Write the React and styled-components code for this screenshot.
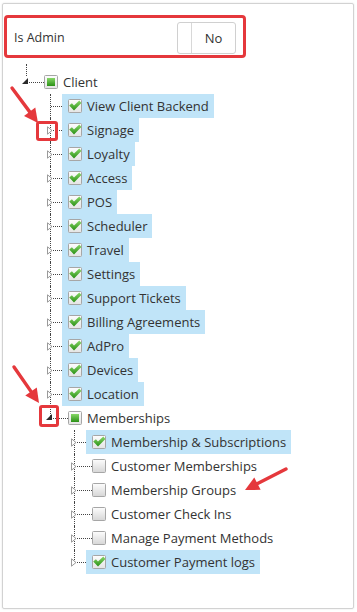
import React from "react";
import styled, { createGlobalStyle } from "styled-components";

const Global = createGlobalStyle`
  html, body { margin: 0; padding: 0; background: #fff; }
  body { font-family: "Open Sans", "Liberation Sans", sans-serif; color: #333; }
  * { box-sizing: border-box; }
`;

const Page = styled.div`
  position: relative;
  width: 357px;
  height: 612px;
  padding: 3px 3px 3px 2px;
`;

const Card = styled.div`
  width: 352px;
  height: 606px;
  border: 1px solid #d2d2d2;
  border-radius: 2px;
  box-shadow: 0 0 2px rgba(0, 0, 0, 0.12);
  padding: 11px 0 0 0;
  display: flex;
  flex-direction: column;
`;

const AdminRow = styled.div`
  margin-left: 1px;
  width: 242px;
  height: 43px;
  border: 3px solid #e5383c;
  border-radius: 4px;
  display: flex;
  align-items: center;
  justify-content: space-between;
  padding: 2px 7px 0 7px;
`;

const Label = styled.span`
  font-size: 12.5px;
  color: #333;
`;

const Toggle = styled.div`
  width: 59px;
  height: 32px;
  border: 1px solid #d0d0d0;
  border-radius: 3px;
  display: flex;
`;

const ToggleKnob = styled.div`
  width: 14px;
  border-right: 1px solid #d8d8d8;
`;

const ToggleText = styled.div`
  flex: 1;
  display: flex;
  align-items: center;
  justify-content: center;
  font-size: 13px;
  color: #333;
`;

const TreeList = styled.ul`
  margin: ${(p) => (p.$root ? "12px 0 0 0" : "0")};
  padding: 0 0 0 ${(p) => (p.$root ? "11px" : "24px")};
  list-style: none;
`;

const Node = styled.li`
  position: relative;
  list-style: none;
  &::before {
    content: "";
    position: absolute;
    left: 12px;
    top: ${(p) => (p.$root ? "-6px" : "0")};
    height: ${(p) => (p.$root ? "12px" : p.$last ? "12px" : "100%")};
    border-left: 1px dotted #444;
  }
`;

const Row = styled.div`
  position: relative;
  display: flex;
  align-items: center;
  height: 24px;
`;

const Expander = styled.span`
  position: relative;
  width: 24px;
  height: 24px;
  flex: none;
  display: flex;
  align-items: center;
  justify-content: center;
  &::after {
    content: "";
    position: absolute;
    left: 13px;
    top: 12px;
    width: 17px;
    border-top: 1px dotted #444;
  }
  svg {
    position: relative;
    z-index: 1;
  }
`;

const Item = styled.span`
  position: relative;
  z-index: 2;
  display: flex;
  align-items: center;
  gap: 5px;
  height: 24px;
  padding: 0 5px 0 6px;
  background: ${(p) => (p.$selected ? "#c0e4f8" : "transparent")};
  font-size: 13px;
  color: #333;
  white-space: nowrap;
`;

const Annotation = styled.div`
  position: absolute;
  left: ${(p) => p.$x}px;
  top: ${(p) => p.$y}px;
  width: ${(p) => p.$w}px;
  height: ${(p) => p.$h}px;
  border: 3px solid #e5383c;
  border-radius: 3px;
  pointer-events: none;
`;

const Overlay = styled.svg`
  position: absolute;
  left: 0;
  top: 0;
  pointer-events: none;
`;

function CheckIcon({ state }) {
  return (
    <svg width="14" height="14" viewBox="0 0 14 14" style={{ overflow: "visible" }}>
      <defs>
        <linearGradient id={`bg-${state}`} x1="0" y1="0" x2="0" y2="1">
          <stop offset="0" stopColor="#fdfdfd" />
          <stop offset="1" stopColor={state === "off" ? "#d6d6d6" : "#e4e4e4"} />
        </linearGradient>
        <linearGradient id="gr" x1="0" y1="0" x2="0" y2="1">
          <stop offset="0" stopColor="#86d766" />
          <stop offset="1" stopColor="#2a9016" />
        </linearGradient>
      </defs>
      <rect x="0.5" y="0.5" width="13" height="13" rx="1" fill={`url(#bg-${state})`} stroke="#a6a6a6" />
      {state === "on" && (
        <path d="M1.2 6.6 L3.9 4.3 L6 6.6 L11.3 1.6 L13.4 4 L6 11.4 Z" fill="url(#gr)" />
      )}
      {state === "part" && <rect x="3" y="3" width="8" height="8" fill="url(#gr)" />}
    </svg>
  );
}

function ExpandIcon({ open }) {
  if (open) {
    return (
      <svg width="8" height="8" viewBox="0 0 8 8" style={{ marginLeft: -3, marginTop: -3 }}>
        <path d="M7 1 L7 7 L1 7 Z" fill="#2a2a2a" />
      </svg>
    );
  }
  return (
    <svg width="6" height="9" viewBox="0 0 6 9">
      <path d="M0.5 0.8 L5 4.5 L0.5 8.2 Z" fill="#fff" stroke="#9a9a9a" strokeWidth="1" />
    </svg>
  );
}

const tree = {
  label: "Client",
  state: "part",
  open: true,
  children: [
    { label: "View Client Backend", state: "on", leaf: true },
    { label: "Signage", state: "on" },
    { label: "Loyalty", state: "on" },
    { label: "Access", state: "on" },
    { label: "POS", state: "on" },
    { label: "Scheduler", state: "on" },
    { label: "Travel", state: "on" },
    { label: "Settings", state: "on" },
    { label: "Support Tickets", state: "on" },
    { label: "Billing Agreements", state: "on" },
    { label: "AdPro", state: "on" },
    { label: "Devices", state: "on" },
    { label: "Location", state: "on" },
    {
      label: "Memberships",
      state: "part",
      open: true,
      children: [
        { label: "Membership & Subscriptions", state: "on" },
        { label: "Customer Memberships", state: "off" },
        { label: "Membership Groups", state: "off" },
        { label: "Customer Check Ins", state: "off" },
        { label: "Manage Payment Methods", state: "off" },
        { label: "Customer Payment logs", state: "on" },
      ],
    },
  ],
};

function TreeNode({ node, last, root }) {
  return (
    <Node $last={last} $root={root}>
      <Row>
        <Expander>{!node.leaf && <ExpandIcon open={node.open} />}</Expander>
        <Item $selected={node.state === "on"}>
          <CheckIcon state={node.state} />
          {node.label}
        </Item>
      </Row>
      {node.open && node.children && (
        <TreeList>
          {node.children.map((c, i) => (
            <TreeNode key={c.label} node={c} last={i === node.children.length - 1} />
          ))}
        </TreeList>
      )}
    </Node>
  );
}

function Arrow({ x1, y1, x2, y2 }) {
  const dx = x2 - x1;
  const dy = y2 - y1;
  const len = Math.hypot(dx, dy);
  const ux = dx / len;
  const uy = dy / len;
  const hl = 14;
  const hw = 7;
  const bx = x2 - ux * hl;
  const by = y2 - uy * hl;
  const px = -uy * hw;
  const py = ux * hw;
  return (
    <g>
      <line x1={x1} y1={y1} x2={bx + ux * 2} y2={by + uy * 2} stroke="#e5383c" strokeWidth="3.4" strokeLinecap="round" />
      <polygon points={`${x2},${y2} ${bx + px},${by + py} ${bx - px},${by - py}`} fill="#e5383c" />
    </g>
  );
}

export default function App() {
  return (
    <>
      <Global />
      <Page>
        <Card>
          <AdminRow>
            <Label>Is Admin</Label>
            <Toggle>
              <ToggleKnob />
              <ToggleText>No</ToggleText>
            </Toggle>
          </AdminRow>
          <TreeList $root>
            <TreeNode node={tree} last root />
          </TreeList>
        </Card>
        <Annotation $x={36} $y={121} $w={22} $h={20} />
        <Annotation $x={39} $y={405} $w={20} $h={22} />
        <Overlay width="357" height="612" viewBox="0 0 357 612">
          <Arrow x1={12} y1={88} x2={38} y2={123} />
          <Arrow x1={14} y1={367} x2={39} y2={403} />
          <Arrow x1={286} y1={469} x2={245} y2={490} />
        </Overlay>
      </Page>
    </>
  );
}
